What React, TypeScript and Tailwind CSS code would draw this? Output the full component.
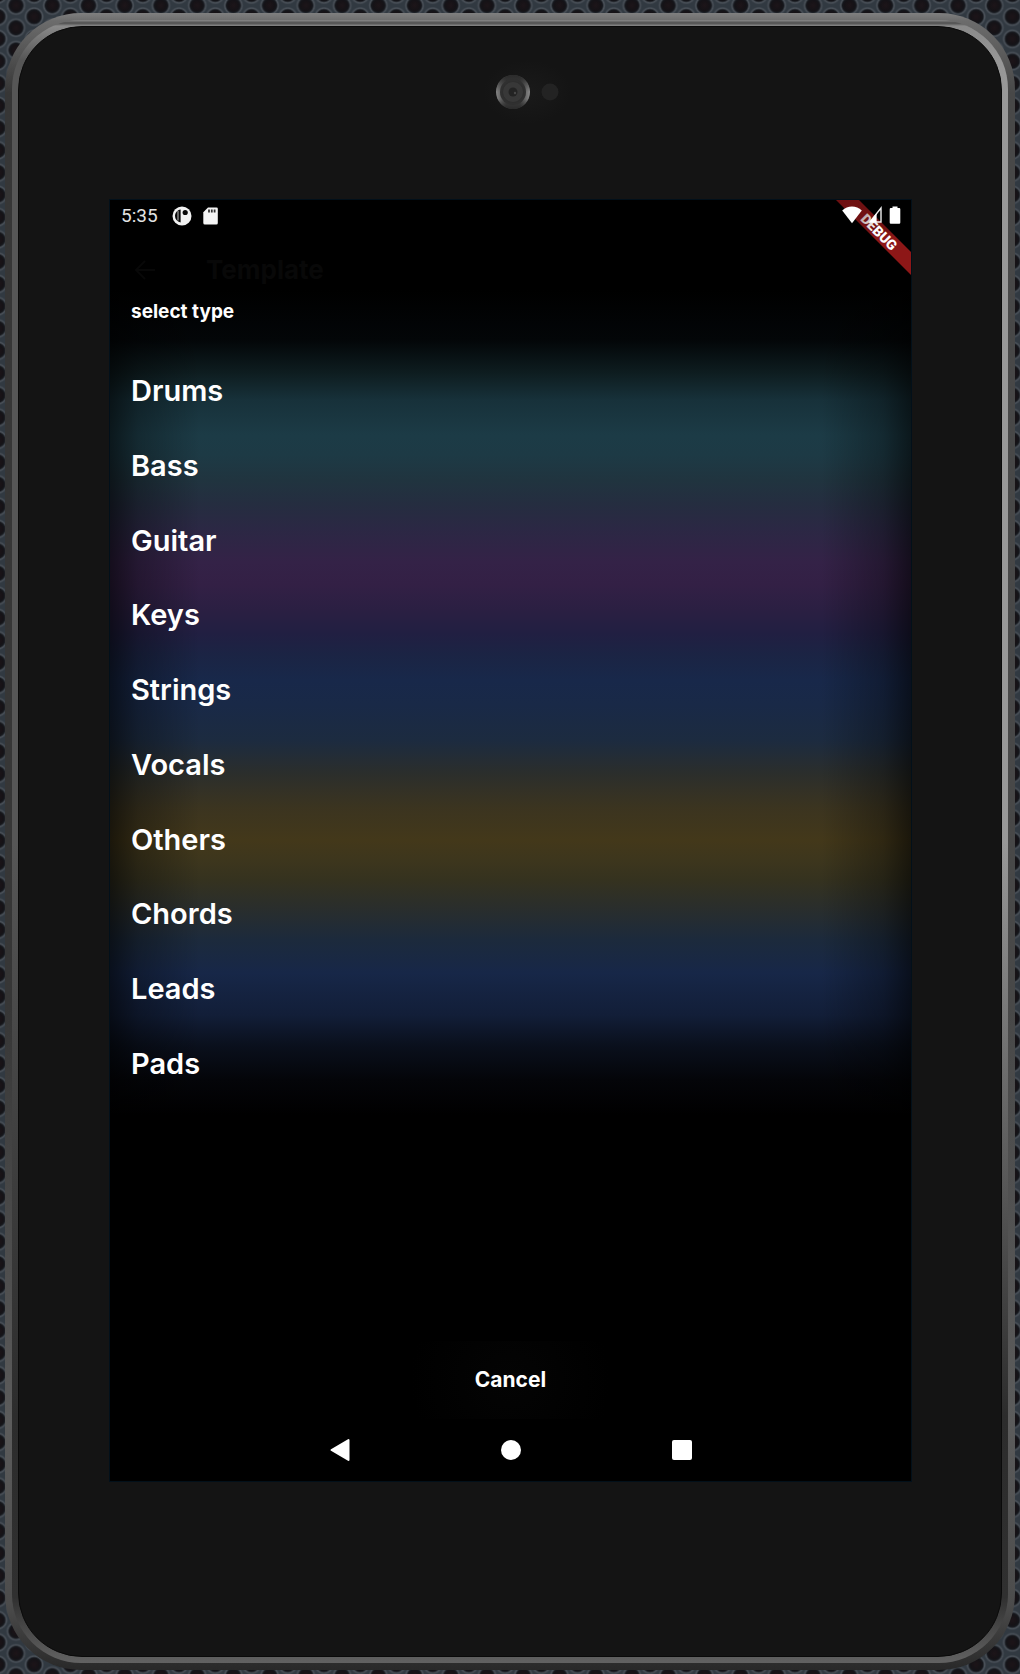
import React from 'react'

const types = ['Drums', 'Bass', 'Guitar', 'Keys', 'Strings', 'Vocals', 'Others', 'Chords', 'Leads', 'Pads']

// perforated metal sheet behind the tablet
const Mesh: React.FC = () => (
  <svg className="absolute inset-0 h-full w-full" aria-hidden="true">
    <defs>
      <radialGradient id="hole">
        <stop offset="0" stopColor="#1d1519" />
        <stop offset="0.5" stopColor="#151216" />
        <stop offset="0.68" stopColor="#15171c" />
        <stop offset="0.84" stopColor="#4c535b" />
        <stop offset="1" stopColor="#343b43" />
      </radialGradient>
      <pattern id="mesh" width="36.23" height="22.27" x="-2.1" y="-5.6" patternUnits="userSpaceOnUse">
        <rect width="36.23" height="22.27" fill="#313941" />
        <circle cx="18.1" cy="11.1" r="10" fill="url(#hole)" />
        <circle cx="0" cy="0" r="10" fill="url(#hole)" />
        <circle cx="36.23" cy="0" r="10" fill="url(#hole)" />
        <circle cx="0" cy="22.27" r="10" fill="url(#hole)" />
        <circle cx="36.23" cy="22.27" r="10" fill="url(#hole)" />
      </pattern>
    </defs>
    <rect width="100%" height="100%" fill="url(#mesh)" />
  </svg>
)

const Camera: React.FC = () => (
  <svg width="120" height="80" viewBox="0 0 120 80" aria-hidden="true">
    <defs>
      <radialGradient id="glow">
        <stop offset="0" stopColor="#1a1a1a" />
        <stop offset="1" stopColor="#141414" />
      </radialGradient>
      <linearGradient id="ring">
        <stop offset="0" stopColor="#858585" />
        <stop offset="0.3" stopColor="#3c3c3c" />
        <stop offset="0.7" stopColor="#3c3c3c" />
        <stop offset="1" stopColor="#8c8c8c" />
      </linearGradient>
      <linearGradient id="ringShade" x2="0" y2="1">
        <stop offset="0" stopColor="#2a2a2a" />
        <stop offset="0.5" stopColor="#333" stopOpacity="0" />
        <stop offset="0.7" stopColor="#333" stopOpacity="0" />
        <stop offset="1" stopColor="#2a2a2a" />
      </linearGradient>
    </defs>
    <ellipse cx="76" cy="40" rx="44" ry="32" fill="url(#glow)" />
    <circle cx="62" cy="40" r="17" fill="url(#ring)" />
    <circle cx="62" cy="40" r="17" fill="url(#ringShade)" />
    <circle cx="62" cy="40" r="13" fill="#303030" />
    <circle cx="62" cy="40" r="10.5" fill="#383838" stroke="#2e2e2e" />
    <circle cx="62" cy="40" r="4.5" fill="#232323" />
    <circle cx="64" cy="41" r="1.2" fill="#484848" />
    <circle cx="99" cy="40" r="8.5" fill="#232323" />
  </svg>
)

const DebugBanner: React.FC = () => (
  <svg className="absolute right-0 top-0" width="80" height="80" viewBox="0 0 80 80">
    <defs>
      <linearGradient id="ribbon" x2="0" y2="1">
        <stop offset="0" stopColor="#6e1011" />
        <stop offset="0.4" stopColor="#741213" />
        <stop offset="0.5" stopColor="#8d1717" />
        <stop offset="1" stopColor="#8d1717" />
      </linearGradient>
      <linearGradient id="ribbonText">
        <stop offset="0" stopColor="#b9a6a6" />
        <stop offset="0.4" stopColor="#ffffff" />
      </linearGradient>
    </defs>
    <path d="M5 0H28L80 52V75Z" fill="url(#ribbon)" />
    <text
      x="48"
      y="37"
      textAnchor="middle"
      transform="rotate(45 48 32)"
      fill="url(#ribbonText)"
      className="font-[Roboto] text-[14px] font-black"
    >
      DEBUG
    </text>
  </svg>
)

const StatusBar: React.FC = () => (
  <div className="relative flex h-8 items-center justify-between pl-[11px] pr-[10px]">
    <div className="flex items-center">
      <span className="font-[Roboto] text-[19px] leading-6 text-[#e4e4e4]">5:35</span>
      <svg className="ml-[14px]" width="20" height="20" viewBox="0 0 20 20" aria-hidden="true">
        <circle cx="10" cy="10" r="9.5" fill="#f2f2f2" />
        <path d="M8.6 3.4V16.4C5 15.6 3 13 3 10C3 6.6 5.2 4 8.6 3.4Z" fill="#080808" />
        <path d="M6 5V14.5" stroke="#8d8d8d" strokeWidth="1.4" />
        <circle cx="13.2" cy="6.5" r="2.6" fill="#080808" />
      </svg>
      <svg className="ml-[11px]" width="15" height="18" viewBox="0 0 15 18" aria-hidden="true">
        <path d="M5 0.5H13.5Q14.8 0.5 14.8 1.8V16Q14.8 17.5 13.3 17.5H1.8Q0.3 17.5 0.3 16V5.2Z" fill="#f5f5f5" />
        <path d="M6 2.5V5.5M8.8 2.5V5.5M11.6 2.5V5.5" stroke="#333" strokeWidth="1.8" />
      </svg>
    </div>
    <div className="flex items-center gap-[7px] pb-[2px]">
      <svg width="20" height="18" viewBox="0 0 20 18" aria-hidden="true">
        <path d="M0.2 4.5C5.5 -0.8 14.5 -0.8 19.8 4.5L10 17.2Z" fill="#fff" />
      </svg>
      <svg width="13" height="18" viewBox="0 0 13 18" aria-hidden="true">
        <path d="M12 2V16H0.8Z" fill="none" stroke="#eee" strokeWidth="1.4" />
        <path d="M7.6 7V16.5H0Z" fill="#fff" />
      </svg>
      <svg width="12" height="18" viewBox="0 0 12 18" aria-hidden="true">
        <path d="M3.5 0.4H8.5V2H10.2Q11.3 2 11.3 3.2V16.5Q11.3 17.7 10.2 17.7H1.8Q0.7 17.7 0.7 16.5V3.2Q0.7 2 1.8 2H3.5Z" fill="#fff" />
      </svg>
    </div>
  </div>
)

const NavBar: React.FC = () => (
  <nav className="flex h-[62px] justify-center">
    <button className="flex w-[171px] items-center justify-center" aria-label="Back">
      <svg width="22" height="24" viewBox="0 0 22 24">
        <path d="M19.5 2V22L2.5 12Z" fill="#fff" stroke="#fff" strokeWidth="2" strokeLinejoin="round" />
      </svg>
    </button>
    <button className="flex w-[171px] items-center justify-center" aria-label="Home">
      <span className="h-5 w-5 rounded-full bg-white" />
    </button>
    <button className="flex w-[171px] items-center justify-center" aria-label="Recents">
      <span className="h-5 w-5 rounded-[2px] bg-white" />
    </button>
  </nav>
)

export default function App() {
  return (
    <div className="relative min-h-screen overflow-hidden px-[5px] pb-[4px] pt-[13px] font-[Inter,sans-serif]">
      <Mesh />
      {/* metal rim, two layers */}
      <div className="relative rounded-[76px] bg-[linear-gradient(to_bottom,#808080_0px,#6c6c6c_8px,#6c6c6c00_80px),linear-gradient(to_bottom,#5c5c5c00_60%,#5c5c5c_85%,#4c4c4c_96%,#292929_100%),linear-gradient(to_right,#363636,#484848)] p-[7px]">
        <div className="rounded-[69px] bg-[linear-gradient(to_bottom,#8a8a8a_0px,#4e4e4e_3px,#8a8a8a_6px,#8a8a8a00_40px),linear-gradient(to_bottom,#2c2c2c00_50%,#2c2c2c_85%,#303030_96%,#626262_100%),linear-gradient(to_right,#565656,#565656_50%,#989898)] p-[6px]">
          <div className="rounded-[64px] border border-[#0a0a0a] bg-[#141414] pb-[174px] pl-[90px] pr-[89px]">
            <div className="flex h-[172px] items-center justify-center pb-[42px]">
              <Camera />
            </div>
            <main className="relative flex min-h-[1283px] flex-col border border-[#02101a] bg-[linear-gradient(to_right,#00000099,#0000004d_28px,transparent_90px,transparent_calc(100%-90px),#0000004d_calc(100%-28px),#00000099),linear-gradient(to_bottom,#000_90px,#030608_140px,#0e1d20_173px,#17313a_200px,#1c3b46_235px,#1d3a45_255px,#20343f_280px,#252d40_305px,#2b2844_328px,#342247_362px,#332045_384px,#2a1f42_412px,#211f42_434px,#1b2444_455px,#18284a_480px,#192947_505px,#1c2b40_540px,#2b2e2c_573px,#3b3420_607px,#43381a_640px,#3d361d_660px,#35321f_680px,#2a2e2c_707px,#1c2a3c_740px,#172748_773px,#121e38_815px,#0a101d_845px,#040509_880px,#000_915px)]">
              <DebugBanner />
              <StatusBar />
              <header className="flex h-[67px] items-center pl-6 pt-2 text-[#080808]">
                <svg width="22" height="22" viewBox="0 0 22 22" fill="none" stroke="currentColor" strokeWidth="2" aria-hidden="true">
                  <path d="M21 11H2M11 2L2 11L11 20" />
                </svg>
                <span className="ml-[50px] text-[26px] font-bold leading-8">Template</span>
              </header>
              <h1 className="pl-[21px] text-[19px] font-bold leading-[26px] text-white">select type</h1>
              <ul className="mt-[29px] grid h-[747px] grid-rows-10">
                {types.map((type) => (
                  <li key={type} className="flex">
                    <button className="w-full pl-[21px] text-left text-[29px] font-semibold leading-9 text-white">
                      {type}
                    </button>
                  </li>
                ))}
              </ul>
              <button className="mt-auto h-[78px] bg-[radial-gradient(circle_at_center,#040404,transparent_100px)] text-[21px] font-bold leading-7 text-white">
                Cancel
              </button>
              <NavBar />
            </main>
          </div>
        </div>
      </div>
    </div>
  )
}
